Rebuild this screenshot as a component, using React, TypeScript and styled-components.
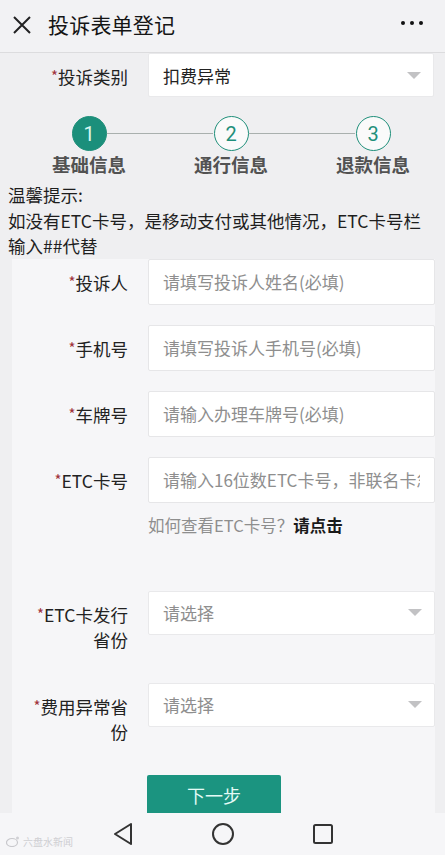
import styled, { createGlobalStyle } from "styled-components";

const GlobalStyle = createGlobalStyle`
  html, body {
    margin: 0;
    padding: 0;
    background: #efeff1;
  }
  body {
    font-family: "Noto Sans CJK SC", "Noto Sans", sans-serif;
    color: #222;
  }
  * { box-sizing: border-box; }
`;

const steps = ["基础信息", "通行信息", "退款信息"];

function App() {
  return (
    <Screen>
      <GlobalStyle />
      <Header>
        <IconButton aria-label="关闭">
          <svg width="20" height="20" viewBox="0 0 20 20">
            <path d="M2 2 L18 18 M18 2 L2 18" stroke="#222" strokeWidth="2" />
          </svg>
        </IconButton>
        <Title>投诉表单登记</Title>
        <MoreDots>
          <span />
          <span />
          <span />
        </MoreDots>
      </Header>

      <Content>
        <CategoryRow>
          <Label><Star>*</Star>投诉类别</Label>
          <SelectBox>
            <SelectValue>扣费异常</SelectValue>
            <Caret />
          </SelectBox>
        </CategoryRow>

        <Stepper>
          {steps.map((s, i) => (
            <Step key={s} $last={i === steps.length - 1}>
              <StepCircle $active={i === 0}>{i + 1}</StepCircle>
              <StepLabel>{s}</StepLabel>
            </Step>
          ))}
        </Stepper>

        <Tip>
          温馨提示:
          <br />
          如没有ETC卡号，是移动支付或其他情况，ETC卡号栏输入##代替
        </Tip>

        <FormCard>
          <FieldRow $gap={20}>
            <Label><Star>*</Star>投诉人</Label>
            <TextInput placeholder="请填写投诉人姓名(必填)" />
          </FieldRow>
          <FieldRow $gap={20}>
            <Label><Star>*</Star>手机号</Label>
            <TextInput placeholder="请填写投诉人手机号(必填)" />
          </FieldRow>
          <FieldRow $gap={20}>
            <Label><Star>*</Star>车牌号</Label>
            <TextInput placeholder="请输入办理车牌号(必填)" />
          </FieldRow>
          <FieldRow $gap={0}>
            <Label><Star>*</Star>ETC卡号</Label>
            <TextInput placeholder="请输入16位数ETC卡号，非联名卡忽略" />
          </FieldRow>
          <HintLine>
            如何查看ETC卡号？<HintLink>请点击</HintLink>
          </HintLine>
          <FieldRow $gap={31}>
            <Label><Star>*</Star>ETC卡发行省份</Label>
            <SelectBox>
              <Placeholder>请选择</Placeholder>
              <Caret />
            </SelectBox>
          </FieldRow>
          <FieldRow $gap={31}>
            <Label><Star>*</Star>费用异常省份</Label>
            <SelectBox>
              <Placeholder>请选择</Placeholder>
              <Caret />
            </SelectBox>
          </FieldRow>
          <ButtonRow>
            <NextButton>下一步</NextButton>
          </ButtonRow>
        </FormCard>
      </Content>

      <NavBar>
        <Watermark>
          <svg width="14" height="11" viewBox="0 0 14 11">
            <ellipse cx="6" cy="6.5" rx="5.5" ry="4" fill="none" stroke="#c8c8cc" strokeWidth="1.2" />
            <circle cx="11.5" cy="2" r="1.5" fill="#d0d0d4" />
          </svg>
          六盘水新闻
        </Watermark>
        <NavIcon>
          <svg width="22" height="24" viewBox="0 0 22 24">
            <path d="M19 2 L3 12 L19 22 Z" fill="none" stroke="#333" strokeWidth="2" strokeLinejoin="round" />
          </svg>
        </NavIcon>
        <NavIcon>
          <svg width="24" height="24" viewBox="0 0 24 24">
            <circle cx="12" cy="12" r="10" fill="none" stroke="#333" strokeWidth="2" />
          </svg>
        </NavIcon>
        <NavIcon>
          <svg width="22" height="22" viewBox="0 0 22 22">
            <rect x="2" y="2" width="18" height="18" rx="1.5" fill="none" stroke="#333" strokeWidth="2" />
          </svg>
        </NavIcon>
      </NavBar>
    </Screen>
  );
}

export default App;

const Screen = styled.div`
  width: 445px;
  height: 855px;
  display: flex;
  flex-direction: column;
  overflow: hidden;
  background: #efeff1;
`;

const Header = styled.header`
  height: 53px;
  flex-shrink: 0;
  display: flex;
  align-items: center;
  padding: 0 14px 0 12px;
  background: #f2f2f4;
  border-bottom: 1px solid #dcdcde;
`;

const IconButton = styled.div`
  width: 20px;
  height: 20px;
  display: flex;
  margin-top: -3px;
`;

const Title = styled.h1`
  flex: 1;
  margin: -5px 0 0 16px;
  font-size: 21px;
  font-weight: 400;
  color: #151515;
  letter-spacing: 0.2px;
`;

const MoreDots = styled.div`
  display: flex;
  gap: 5px;
  margin-top: -6px;
  margin-right: 8px;

  span {
    width: 4px;
    height: 4px;
    border-radius: 50%;
    background: #111;
  }
`;

const Content = styled.main`
  flex: 1;
  overflow: hidden;
  display: flex;
  flex-direction: column;
`;

const CategoryRow = styled.div`
  display: grid;
  grid-template-columns: 128px 1fr;
  column-gap: 20px;
  align-items: center;
  padding-right: 11px;
`;

const Label = styled.div`
  font-size: 17.5px;
  line-height: 25px;
  color: #222;
  text-align: right;
  padding-top: 10px;
  padding-left: 14px;
  align-self: start;
  word-break: break-all;
`;

const Star = styled.span`
  color: #a0333b;
  font-size: 15px;
  vertical-align: 2px;
`;

const SelectBox = styled.div`
  height: 44px;
  display: flex;
  align-items: center;
  justify-content: space-between;
  padding: 0 12px 0 14px;
  background: #fff;
  border: 1px solid #e9e9eb;
  border-radius: 2px;
`;

const SelectValue = styled.span`
  font-size: 17px;
  color: #222;
`;

const Placeholder = styled.span`
  font-size: 17px;
  color: #8e8e8e;
`;

const Caret = styled.span`
  width: 0;
  height: 0;
  border-left: 7px solid transparent;
  border-right: 7px solid transparent;
  border-top: 7px solid #c2c2c4;
`;

const Stepper = styled.div`
  display: grid;
  grid-template-columns: repeat(3, 142px);
  padding: 19px 0 0 18px;
`;

const Step = styled.div<{ $last: boolean }>`
  position: relative;
  display: flex;
  flex-direction: column;
  align-items: center;

  &::after {
    content: "";
    display: ${(p) => (p.$last ? "none" : "block")};
    position: absolute;
    top: 17px;
    left: calc(50% + 18px);
    width: calc(100% - 36px);
    height: 1px;
    background: #a9b0ae;
  }
`;

const StepCircle = styled.div<{ $active: boolean }>`
  width: 35px;
  height: 35px;
  border-radius: 50%;
  display: flex;
  align-items: center;
  justify-content: center;
  font-family: Roboto, "Noto Sans", sans-serif;
  font-size: 20px;
  color: ${(p) => (p.$active ? "#d8f5ee" : "#1f8f7a")};
  background: ${(p) => (p.$active ? "#1b8f7b" : "#fafafa")};
  border: 1.5px solid #1f8f7a;
`;

const StepLabel = styled.div`
  margin-top: 1px;
  font-size: 18.5px;
  font-weight: 700;
  color: #525252;
  line-height: 25px;
`;

const Tip = styled.p`
  margin: 5px 0 0 0;
  padding: 0 8px;
  font-size: 17.5px;
  line-height: 25.5px;
  color: #1e1e1e;
`;

const FormCard = styled.section`
  margin: 0 10px 0 12px;
  padding-top: 0;
  background: #f6f6f8;
  display: flex;
  flex-direction: column;
`;

const FieldRow = styled.div<{ $gap: number }>`
  display: grid;
  grid-template-columns: 116px 1fr;
  column-gap: 20px;
  margin-bottom: ${(p) => p.$gap}px;
`;

const TextInput = styled.input`
  height: 46px;
  width: 100%;
  padding: 0 14px;
  font-family: inherit;
  font-size: 17px;
  color: #222;
  background: #fff;
  border: 1px solid #e6e6e8;
  border-radius: 2px;
  outline: none;

  &::placeholder {
    color: #8e8e8e;
  }
`;

const HintLine = styled.div`
  margin: 10px 0 53px 136px;
  font-size: 16.5px;
  line-height: 25px;
  color: #8e8e8e;
`;

const HintLink = styled.span`
  color: #1a1a1a;
  font-weight: 700;
`;

const ButtonRow = styled.div`
  padding-left: 135px;
`;

const NextButton = styled.button`
  width: 134px;
  height: 40px;
  border: none;
  border-radius: 2px;
  background: #1b9480;
  color: #e4fbf6;
  font-family: inherit;
  font-size: 18px;
  padding: 0;
`;

const NavBar = styled.nav`
  position: relative;
  height: 42px;
  flex-shrink: 0;
  display: grid;
  grid-template-columns: repeat(3, 100px);
  justify-content: center;
  align-items: center;
  background: #f6f6f8;
  padding-left: 1px;
`;

const NavIcon = styled.div`
  display: flex;
  justify-content: center;
  align-items: center;
`;

const Watermark = styled.div`
  position: absolute;
  left: 6px;
  bottom: 6px;
  display: flex;
  align-items: center;
  gap: 3px;
  font-size: 10px;
  color: #cfcfd3;
`;
